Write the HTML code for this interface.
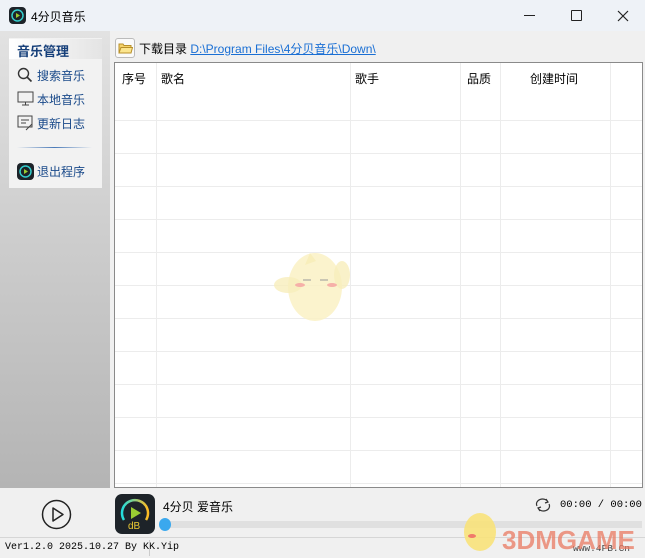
<!DOCTYPE html>
<html><head><meta charset="utf-8"><style>
*{margin:0;padding:0;box-sizing:border-box}
body{width:645px;height:558px;overflow:hidden;background:#f0f0f0;font-family:"Liberation Sans","Noto Sans CJK SC",sans-serif;font-size:12px;color:#000;position:relative}
.abs{position:absolute;white-space:nowrap}
#title{left:0;top:0;width:645px;height:31px;background:#eef2f7}
#side{left:0;top:31px;width:110px;height:457px;background:linear-gradient(#e2e2e2,#b4b4b4)}
#panel{left:9px;top:38px;width:93px;height:150px;background:#f2f2f2}
.item{font-size:12px;color:#1a4a8a}
#tbl{left:114px;top:62px;width:529px;height:426px;background:#fff;border:1px solid #8a8a8a;overflow:hidden}
.vl{position:absolute;top:0;width:1px;height:426px;background:#ececec}
.hl{position:absolute;left:0;width:529px;height:1px;background:#ececec}
.th{position:absolute;top:7px;font-size:12px}
</style></head><body>
<div id="title" class="abs">
 <svg class="abs" style="left:9px;top:7px" width="17" height="17"><rect width="17" height="17" rx="4" fill="#1d2329"/><circle cx="8.5" cy="8.5" r="5.5" fill="none" stroke="#3cc" stroke-width="1.5"/><path d="M7 6 L11 8.5 L7 11Z" fill="#9c3"/></svg>
 <div class="abs" style="left:31px;top:8px;font-size:12px">4分贝音乐</div>
 <div class="abs" style="left:524px;top:15px;width:11px;height:1px;background:#222"></div>
 <div class="abs" style="left:571px;top:10px;width:11px;height:11px;border:1.3px solid #222;border-radius:1px"></div>
 <svg class="abs" style="left:617px;top:10px" width="12" height="12"><path d="M1 1L11 11M11 1L1 11" stroke="#222" stroke-width="1.2"/></svg>
</div>
<div id="side" class="abs"></div>
<div id="panel" class="abs"></div>
<div class="abs" style="left:9px;top:39px;width:93px;height:20px;background:linear-gradient(90deg,#fff,#e4e4e4)"></div>
<div class="abs" style="left:17px;top:41px;font-weight:bold;font-size:13px;color:#17407a">音乐管理</div>
<svg class="abs" style="left:17px;top:67px" width="16" height="16"><circle cx="6.5" cy="6.5" r="5" fill="none" stroke="#333" stroke-width="1.4"/><path d="M10 10L14.5 14.5" stroke="#333" stroke-width="1.6"/></svg>
<div class="abs item" style="left:37px;top:67px">搜索音乐</div>
<svg class="abs" style="left:17px;top:91px" width="17" height="16"><rect x="1" y="1" width="15" height="10" fill="none" stroke="#444"/><path d="M8.5 11V14M5 14H12" stroke="#444"/></svg>
<div class="abs item" style="left:37px;top:91px">本地音乐</div>
<svg class="abs" style="left:17px;top:115px" width="17" height="16"><rect x="1" y="1" width="14" height="11" fill="none" stroke="#444"/><path d="M4 5H12M4 8H9M9 15L15 9" stroke="#444"/></svg>
<div class="abs item" style="left:37px;top:115px">更新日志</div>
<div class="abs" style="left:17px;top:147px;width:75px;height:1px;background:linear-gradient(90deg,#f2f2f2,#4a7ab8,#f2f2f2)"></div>
<svg class="abs" style="left:17px;top:163px" width="17" height="17"><rect width="17" height="17" rx="4" fill="#1d2329"/><circle cx="8.5" cy="8.5" r="5.5" fill="none" stroke="#3cc" stroke-width="1.5"/><path d="M7 6 L11 8.5 L7 11Z" fill="#9c3"/></svg>
<div class="abs item" style="left:37px;top:163px">退出程序</div>

<div class="abs" style="left:115px;top:38px;width:20px;height:20px;border:1px solid #bbb;border-radius:3px;background:#fafafa"></div>
<svg class="abs" style="left:118px;top:42px" width="15" height="13"><path d="M1 2H5L6 3.5H13V11H1Z" fill="#f5d26a" stroke="#b8902a"/><path d="M1 11L3 5.5H14.5L13 11Z" fill="#fbe58e" stroke="#b8902a"/></svg>
<div class="abs" style="left:139px;top:40px;font-size:12px">下载目录 <span style="color:#1a6fd4;text-decoration:underline">D:\Program Files\4分贝音乐\Down\</span></div>

<div id="tbl" class="abs">
 <div class="vl" style="left:41px"></div><div class="vl" style="left:235px"></div><div class="vl" style="left:345px"></div><div class="vl" style="left:385px"></div><div class="vl" style="left:495px"></div>
 <div class="hl" style="top:57px"></div><div class="hl" style="top:90px"></div><div class="hl" style="top:123px"></div><div class="hl" style="top:156px"></div><div class="hl" style="top:189px"></div><div class="hl" style="top:222px"></div><div class="hl" style="top:255px"></div><div class="hl" style="top:288px"></div><div class="hl" style="top:321px"></div><div class="hl" style="top:354px"></div><div class="hl" style="top:387px"></div><div class="hl" style="top:420px"></div>
 <div class="th" style="left:7px">序号</div><div class="th" style="left:46px">歌名</div><div class="th" style="left:240px">歌手</div><div class="th" style="left:352px">品质</div><div class="th" style="left:415px">创建时间</div>
 <svg class="abs" style="left:155px;top:172px" width="90" height="95"><ellipse cx="45" cy="52" rx="27" ry="34" fill="#faf1c4" opacity=".85"/><ellipse cx="18" cy="50" rx="14" ry="8" fill="#f8eebb" opacity=".8"/><ellipse cx="72" cy="40" rx="8" ry="14" fill="#f8eebb" opacity=".8"/><path d="M35 30L40 18L46 26" fill="#f8eebb"/><ellipse cx="30" cy="50" rx="5" ry="2" fill="#f6b0a8"/><ellipse cx="62" cy="50" rx="5" ry="2" fill="#f6b0a8"/><path d="M33 45H41M50 45H58" stroke="#999"/></svg>
</div>

<svg class="abs" style="left:41px;top:499px" width="31" height="31"><circle cx="15.5" cy="15.5" r="14" fill="none" stroke="#222" stroke-width="1.5"/><path d="M12 9V22L22 15.5Z" fill="none" stroke="#222" stroke-width="1.5" stroke-linejoin="round"/></svg>
<svg class="abs" style="left:115px;top:494px" width="40" height="40"><rect width="40" height="40" rx="7" fill="#1d2329"/><path d="M9 26A13 13 0 1 1 31 26" fill="none" stroke="url(#g)" stroke-width="2.5"/><defs><linearGradient id="g"><stop offset="0" stop-color="#2dd"/><stop offset="1" stop-color="#fb2"/></linearGradient></defs><path d="M16 13L26 19L16 25Z" fill="#9c3"/><text x="13" y="35" font-size="10" fill="#ec3" font-family="Liberation Sans">dB</text></svg>
<div class="abs" style="left:163px;top:498px;font-size:12px">4分贝 爱音乐</div>
<svg class="abs" style="left:534px;top:497px" width="18" height="16"><path d="M3 9A6 5 0 0 1 14 5M15 7A6 5 0 0 1 4 11M12 2L14 5L11 6M6 14L4 11L7 10" fill="none" stroke="#333" stroke-width="1.2"/></svg>
<div class="abs" style="left:560px;top:499px;font-family:'Liberation Mono',monospace;font-size:10.5px">00:00 / 00:00</div>
<div class="abs" style="left:160px;top:521px;width:482px;height:7px;background:#e0e0e0"></div>
<div class="abs" style="left:159px;top:518px;width:12px;height:13px;border-radius:50%;background:#3aa8ee"></div>
<div class="abs" style="left:0;top:537px;width:645px;height:1px;background:#d6d6d6"></div>
<div class="abs" style="left:5px;top:542px;font-family:'Liberation Mono',monospace;font-size:10px">Ver1.2.0 2025.10.27 By KK.Yip</div>
<div class="abs" style="left:149px;top:540px;width:1px;height:16px;background:#ccc"></div>
<div class="abs" style="left:573px;top:543px;font-family:'Liberation Mono',monospace;font-size:9.5px;color:#444">www.4FB.Cn</div>
<svg class="abs" style="left:452px;top:506px" width="190" height="52"><ellipse cx="28" cy="26" rx="16" ry="19" fill="#f8e27a" opacity=".9"/><ellipse cx="20" cy="30" rx="4" ry="2" fill="#f07a6a"/><text x="50" y="43" font-size="26" font-weight="bold" fill="#ea7a62" opacity=".75" font-family="Liberation Sans">3DMGAME</text></svg>
</body></html>
